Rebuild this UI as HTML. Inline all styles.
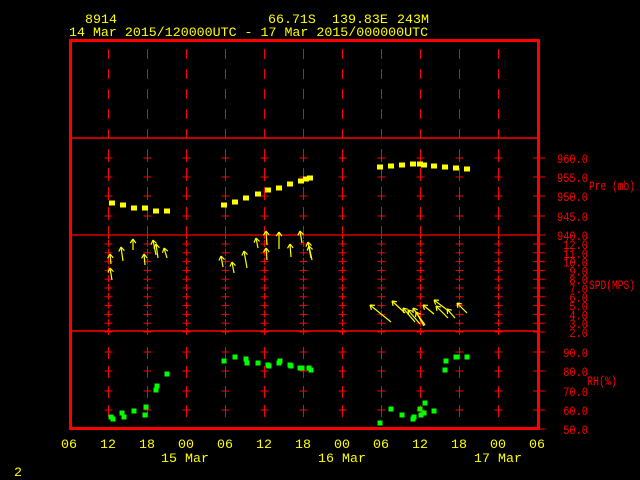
<!DOCTYPE html>
<html><head><meta charset="utf-8"><style>
html,body{margin:0;padding:0;background:#000;width:640px;height:480px;overflow:hidden}
svg{display:block}
text{font-family:"Liberation Mono",monospace}
</style></head><body>
<svg id="s" width="640" height="480" xmlns="http://www.w3.org/2000/svg">
<rect width="640" height="480" fill="#000"/>
<g fill="#ffff00" font-size="13.3">
<text x="85" y="23">8914</text>
<text x="268" y="23">66.71S</text>
<text x="332" y="23">139.83E</text>
<text x="397" y="23">243M</text>
<text x="69" y="36">14 Mar 2015/120000UTC - 17 Mar 2015/000000UTC</text>
</g>
<g id="grid" stroke="#ff0000" stroke-width="1"></g>
<g stroke="#ff0000" fill="none">
<rect x="70.5" y="40.5" width="468" height="388" stroke-width="3"/>
<line x1="71" y1="138" x2="538" y2="138" stroke-width="1.5"/>
<line x1="71" y1="235" x2="538" y2="235" stroke-width="1.2"/>
<line x1="71" y1="331" x2="538" y2="331" stroke-width="1.5"/>
</g>
<g id="rlab" fill="#ff0000" font-size="13" text-anchor="end"></g>
<g fill="#ff0000" font-size="13">
<text x="589" y="190" textLength="46" lengthAdjust="spacingAndGlyphs">Pre (mb)</text>
<text x="589" y="289" textLength="46" lengthAdjust="spacingAndGlyphs">SPD(MPS)</text>
<text x="587" y="385" textLength="30" lengthAdjust="spacingAndGlyphs">RH(%)</text>
</g>
<g id="xlab" fill="#ffff00" font-size="13.3" text-anchor="middle"></g>
<g fill="#ffff00" font-size="13.3" text-anchor="middle">
<text x="185" y="462">15 Mar</text>
<text x="342" y="462">16 Mar</text>
<text x="498" y="462">17 Mar</text>
</g>
<text x="14" y="476" fill="#ffff00" font-size="13.3">2</text>
<g id="pre" fill="#ffff00"></g>
<g id="wind" stroke="#ffff00" stroke-width="1.2" fill="none"></g>
<g id="rh" fill="#00ff00"></g>
</svg>
<script>
var NS="http://www.w3.org/2000/svg";
function el(p,t,a,txt){var e=document.createElementNS(NS,t);for(var k in a)e.setAttribute(k,a[k]);if(txt)e.textContent=txt;document.getElementById(p).appendChild(e);return e;}
function ln(p,x1,y1,x2,y2){el(p,'line',{x1:x1,y1:y1,x2:x2,y2:y2});}
var cols=[];for(var k=1;k<=11;k++)cols.push(69.5+39*k);
cols.forEach(function(x){for(var y=49;y<138;y+=20)ln('grid',x,y,x,Math.min(y+10,138));});
var pre=[158,177,196,216,235];
var spd=[];for(var i=0;i<11;i++)spd.push(244+i*8.8);
var rh=[352,371,391,410,429];
cols.forEach(function(x){
 pre.forEach(function(y){ln('grid',x,y-9,x,y+4);ln('grid',x-4,y,x+4,y);});
 spd.forEach(function(y){ln('grid',x,y-4,x,y+3);ln('grid',x-4,y,x+4,y);});
 rh.slice(0,4).forEach(function(y){ln('grid',x,y-5,x,y+7);ln('grid',x-4,y,x+4,y);});
});
var labs=[[158,"960.0"],[177,"955.0"],[196,"950.0"],[216,"945.0"],[235,"940.0"]];
var sv=["12.0","11.0","10.0","9.0","8.0","7.0","6.0","5.0","4.0","3.0","2.0"];
spd.forEach(function(y,i){labs.push([y,sv[i]]);});
labs.push([352,"90.0"],[371,"80.0"],[391,"70.0"],[410,"60.0"],[429,"50.0"]);
labs.forEach(function(l){ln('grid',533,l[0],545,l[0]);var t=el('rlab','text',{x:588,y:l[0]+5},l[1]);t.setAttribute('textLength',l[1].length*6.2);t.setAttribute('lengthAdjust','spacingAndGlyphs');});
var xl=["06","12","18","00","06","12","18","00","06","12","18","00","06"];
xl.forEach(function(t,i){el('xlab','text',{x:69+39*i,y:448},t);});
var P=[[112,203],[123,205],[134,208],[145,208],[156,211],[167,211],[224,205],[235,202],[246,198],[258,194],[268,190],[279,188],[290,184],[301,181],[306,179],[310,178],[380,167],[391,166],[402,165],[413,164],[420,164],[424,165],[434,166],[445,167],[456,168],[467,169]];
P.forEach(function(p){el('pre','rect',{x:p[0]-3,y:p[1]-2.5,width:6,height:5});});
var R=[[111,417],[113,419],[122,413],[124,417],[134,411],[145,415],[146,407],[156,390],[157,386],[167,374],[224,361],[235,357],[246,359],[247,363],[258,363],[268,365],[269,366],[279,363],[280,361],[290,365],[291,366],[300,368],[302,368],[309,368],[311,370],[380,423],[391,409],[402,415],[413,419],[414,417],[420,409],[421,415],[424,413],[425,403],[434,411],[445,370],[446,361],[456,357],[457,357],[467,357]];
R.forEach(function(p){el('rh','rect',{x:p[0]-2.5,y:p[1]-2.5,width:5,height:5});});
var W=[[110,254,111,264],[110,268,112,280],[121,247,123,261],[133,239,133,250],[144,254,145,265],[153,240,156,255],[156,244,158,258],[164,248,167,258],
[221,256,223,267],[232,262,234,273],[244,251,247,268],[256,238,258,248],[266,231,267,245],[266,248,267,260],[279,232,279,249],[290,244,291,257],[300,231,302,243],[308,242,311,258],[309,246,312,260],
[370,305,391,322],[392,301,405,313],[403,308,415,322],[408,310,420,324],[413,308,425,325],[416,312,424,326],[423,305,434,314],[434,300,450,312],[436,306,448,318],[447,309,455,318],[457,303,467,313]];
W.forEach(function(w){var hx=w[0],hy=w[1],tx=w[2],ty=w[3];ln('wind',tx,ty,hx,hy);
 var dx=tx-hx,dy=ty-hy,L=Math.sqrt(dx*dx+dy*dy);dx/=L;dy/=L;var a=0.6,s=5;
 [a,-a].forEach(function(t){var c=Math.cos(t),sn=Math.sin(t);ln('wind',hx,hy,hx+s*(dx*c-dy*sn),hy+s*(dx*sn+dy*c));});});
</script>
</body></html>
